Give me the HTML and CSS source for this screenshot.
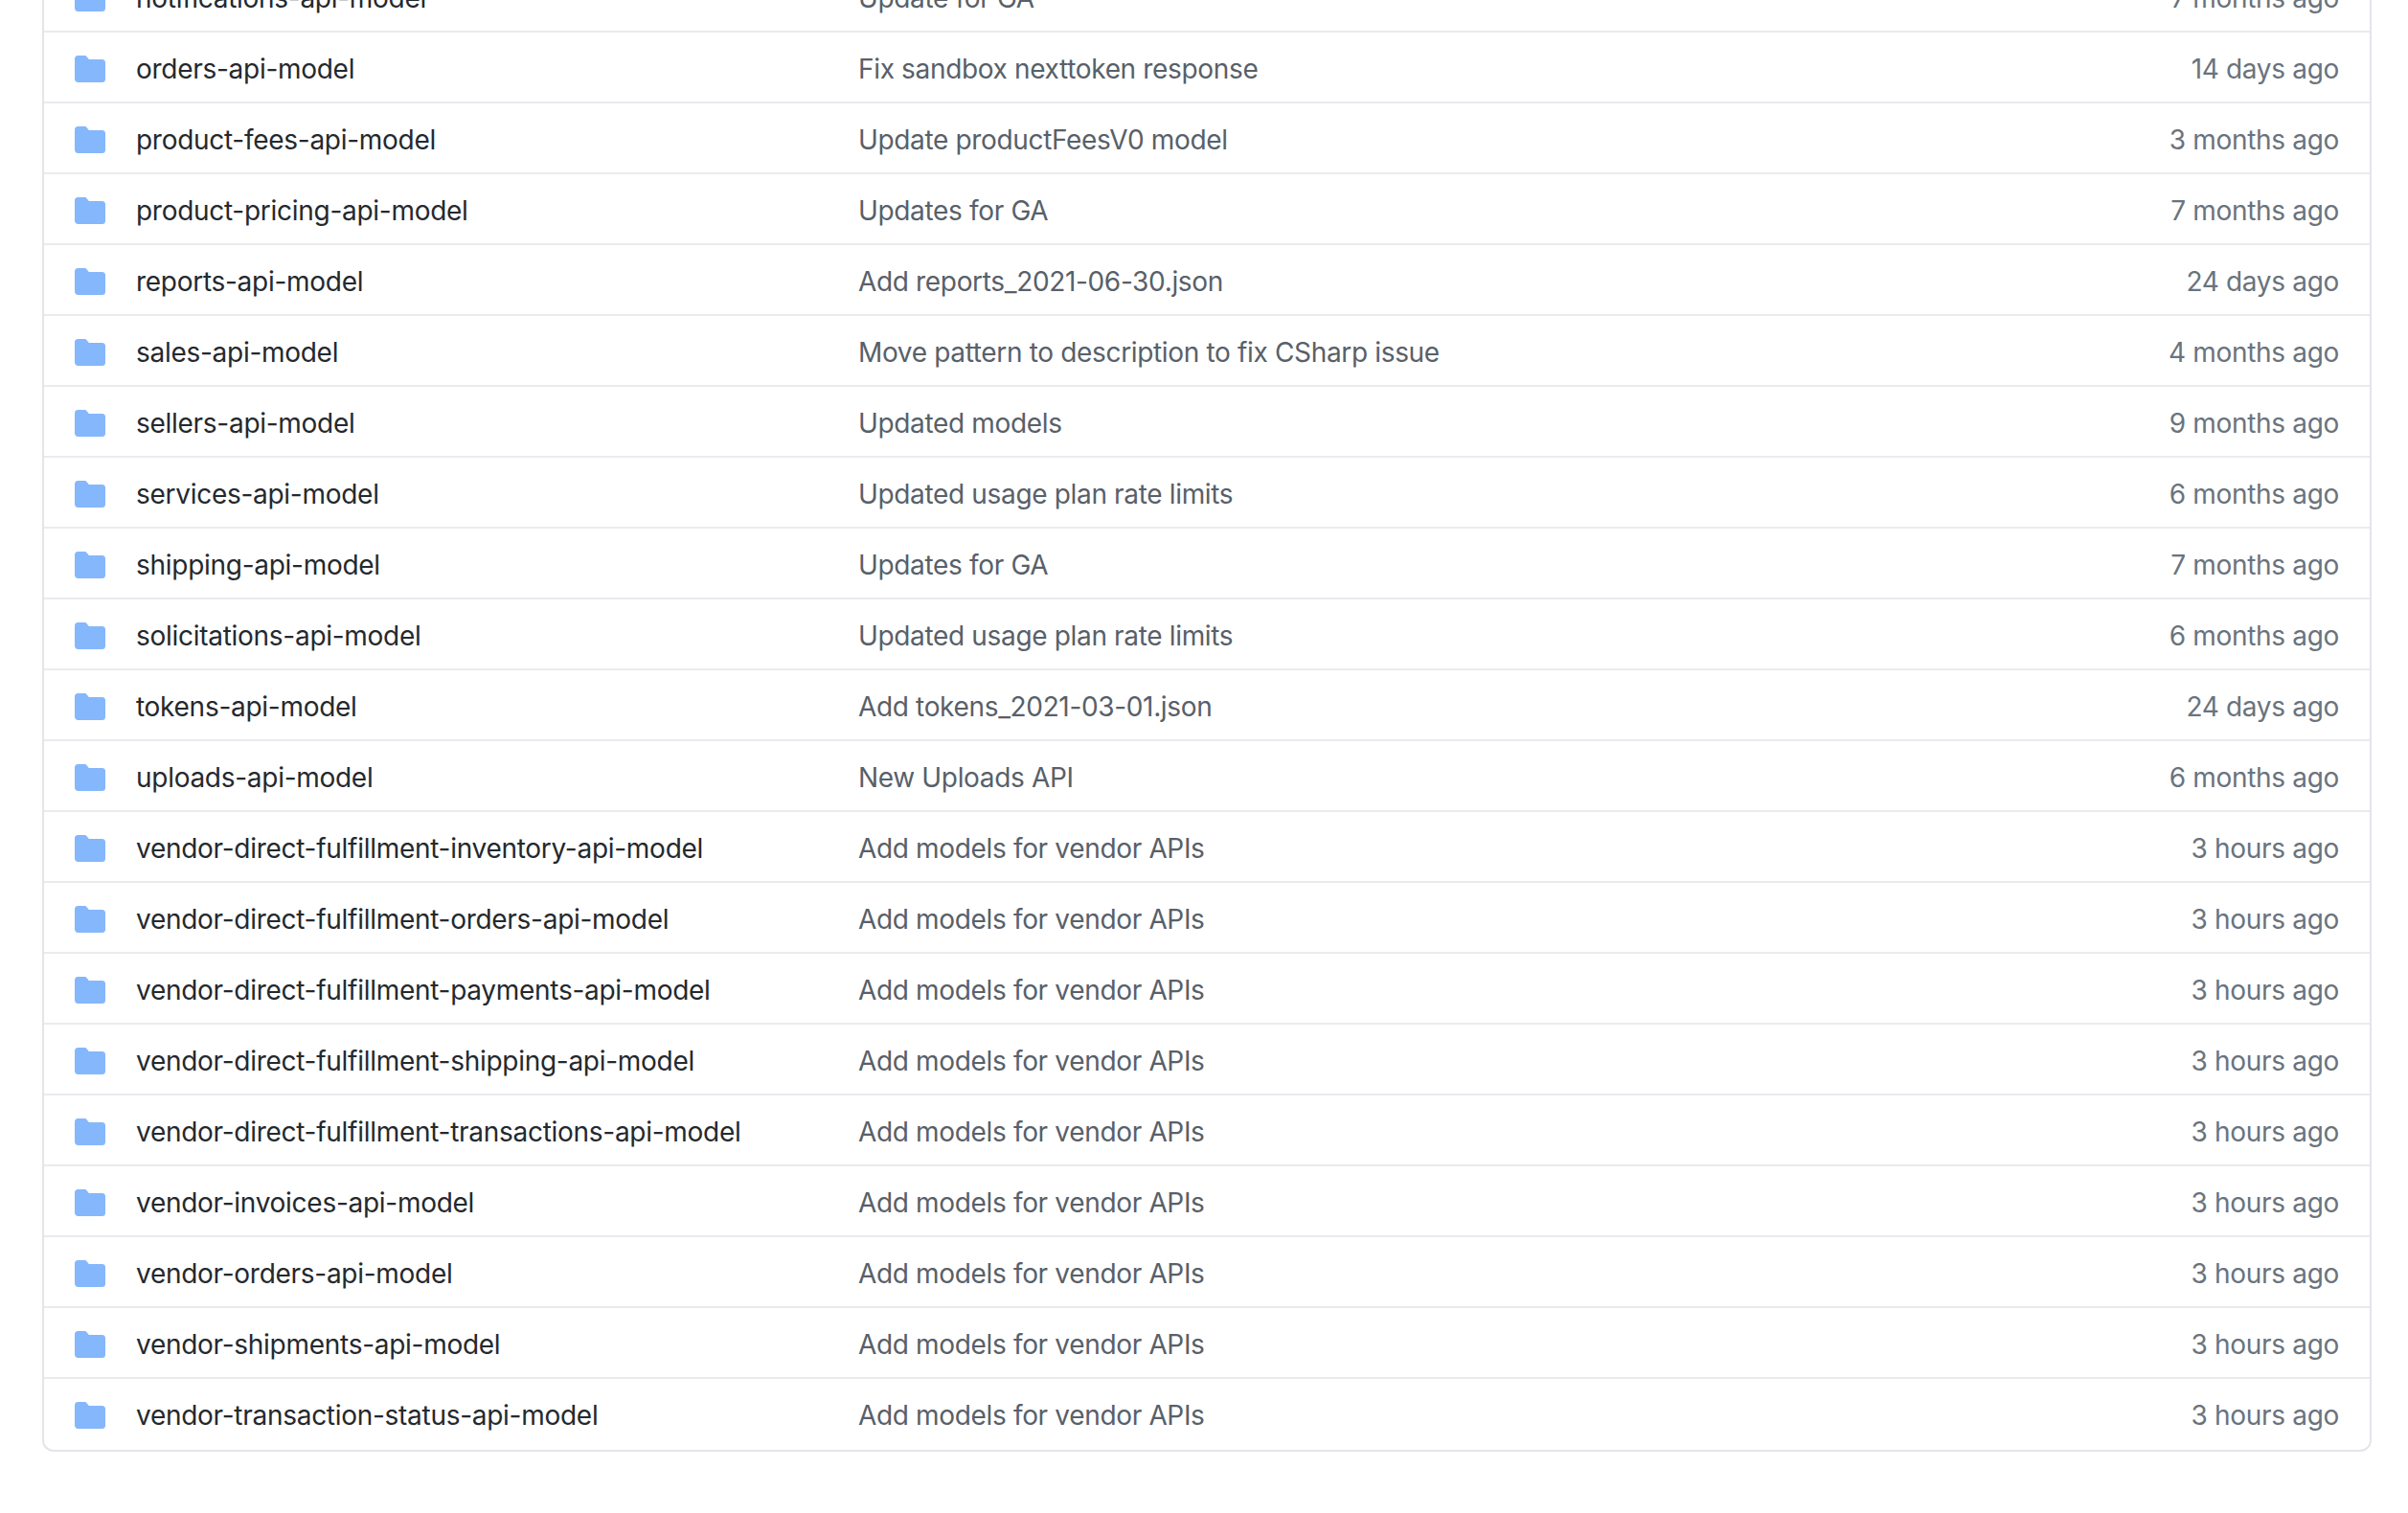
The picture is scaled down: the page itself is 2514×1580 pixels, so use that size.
FILE: index.html
```html
<!DOCTYPE html>
<html lang="en">
<head>
<meta charset="utf-8">
<title>Models</title>
<link rel="stylesheet" href="styles.css">
</head>
<body>
<svg class="defs" width="0" height="0" aria-hidden="true"><symbol id="folder" viewBox="0 0 16 16"><path d="M1.75 1A1.75 1.75 0 000 2.75v10.5C0 14.216.784 15 1.75 15h12.5A1.75 1.75 0 0016 13.25v-8.5A1.75 1.75 0 0014.25 3H7.5a.25.25 0 01-.2-.1l-.9-1.2C6.07 1.26 5.55 1 5 1H1.75z"/></symbol></svg>
<main class="files">
<div class="row"><svg class="icon"><use href="#folder"/></svg><a class="name">notifications-api-model</a><span class="msg">Update for GA</span><span class="age">7 months ago</span></div>
<div class="row"><svg class="icon"><use href="#folder"/></svg><a class="name">orders-api-model</a><span class="msg">Fix sandbox nexttoken response</span><span class="age">14 days ago</span></div>
<div class="row"><svg class="icon"><use href="#folder"/></svg><a class="name">product-fees-api-model</a><span class="msg">Update productFeesV0 model</span><span class="age">3 months ago</span></div>
<div class="row"><svg class="icon"><use href="#folder"/></svg><a class="name">product-pricing-api-model</a><span class="msg">Updates for GA</span><span class="age">7 months ago</span></div>
<div class="row"><svg class="icon"><use href="#folder"/></svg><a class="name">reports-api-model</a><span class="msg">Add reports_2021-06-30.json</span><span class="age">24 days ago</span></div>
<div class="row"><svg class="icon"><use href="#folder"/></svg><a class="name">sales-api-model</a><span class="msg">Move pattern to description to fix CSharp issue</span><span class="age">4 months ago</span></div>
<div class="row"><svg class="icon"><use href="#folder"/></svg><a class="name">sellers-api-model</a><span class="msg">Updated models</span><span class="age">9 months ago</span></div>
<div class="row"><svg class="icon"><use href="#folder"/></svg><a class="name">services-api-model</a><span class="msg">Updated usage plan rate limits</span><span class="age">6 months ago</span></div>
<div class="row"><svg class="icon"><use href="#folder"/></svg><a class="name">shipping-api-model</a><span class="msg">Updates for GA</span><span class="age">7 months ago</span></div>
<div class="row"><svg class="icon"><use href="#folder"/></svg><a class="name">solicitations-api-model</a><span class="msg">Updated usage plan rate limits</span><span class="age">6 months ago</span></div>
<div class="row"><svg class="icon"><use href="#folder"/></svg><a class="name">tokens-api-model</a><span class="msg">Add tokens_2021-03-01.json</span><span class="age">24 days ago</span></div>
<div class="row"><svg class="icon"><use href="#folder"/></svg><a class="name">uploads-api-model</a><span class="msg">New Uploads API</span><span class="age">6 months ago</span></div>
<div class="row"><svg class="icon"><use href="#folder"/></svg><a class="name">vendor-direct-fulfillment-inventory-api-model</a><span class="msg">Add models for vendor APIs</span><span class="age">3 hours ago</span></div>
<div class="row"><svg class="icon"><use href="#folder"/></svg><a class="name">vendor-direct-fulfillment-orders-api-model</a><span class="msg">Add models for vendor APIs</span><span class="age">3 hours ago</span></div>
<div class="row"><svg class="icon"><use href="#folder"/></svg><a class="name">vendor-direct-fulfillment-payments-api-model</a><span class="msg">Add models for vendor APIs</span><span class="age">3 hours ago</span></div>
<div class="row"><svg class="icon"><use href="#folder"/></svg><a class="name">vendor-direct-fulfillment-shipping-api-model</a><span class="msg">Add models for vendor APIs</span><span class="age">3 hours ago</span></div>
<div class="row"><svg class="icon"><use href="#folder"/></svg><a class="name">vendor-direct-fulfillment-transactions-api-model</a><span class="msg">Add models for vendor APIs</span><span class="age">3 hours ago</span></div>
<div class="row"><svg class="icon"><use href="#folder"/></svg><a class="name">vendor-invoices-api-model</a><span class="msg">Add models for vendor APIs</span><span class="age">3 hours ago</span></div>
<div class="row"><svg class="icon"><use href="#folder"/></svg><a class="name">vendor-orders-api-model</a><span class="msg">Add models for vendor APIs</span><span class="age">3 hours ago</span></div>
<div class="row"><svg class="icon"><use href="#folder"/></svg><a class="name">vendor-shipments-api-model</a><span class="msg">Add models for vendor APIs</span><span class="age">3 hours ago</span></div>
<div class="row"><svg class="icon"><use href="#folder"/></svg><a class="name">vendor-transaction-status-api-model</a><span class="msg">Add models for vendor APIs</span><span class="age">3 hours ago</span></div>
</main>
</body>
</html>
```

FILE: styles.css
```css
html, body {
  margin: 0;
  height: 1580px;
  overflow: hidden;
  background: #fff;
}
body {
  font-family: Inter, "Liberation Sans", sans-serif;
  font-size: 28px;
  letter-spacing: -0.28px;
  color: #24292e;
}
.defs {
  display: block;
  height: 0;
}
.files {
  margin: -44px 38px 0 44px;
  padding-bottom: 2px;
  border: 2px solid #e4e5ea;
  border-radius: 12px;
}
.row {
  box-sizing: border-box;
  display: flex;
  align-items: center;
  height: 74px;
  padding: 4px 32px 0;
  border-top: 2px solid #eaebef;
}
.icon {
  flex: none;
  width: 32px;
  height: 32px;
  margin-right: 32px;
  fill: #85b7fc;
}
.name {
  flex: none;
  width: 754px;
}
.msg {
  flex: 1;
  letter-spacing: -0.34px;
  color: #586069;
}
.age {
  flex: none;
  letter-spacing: -0.32px;
  color: #6a737d;
}
```
